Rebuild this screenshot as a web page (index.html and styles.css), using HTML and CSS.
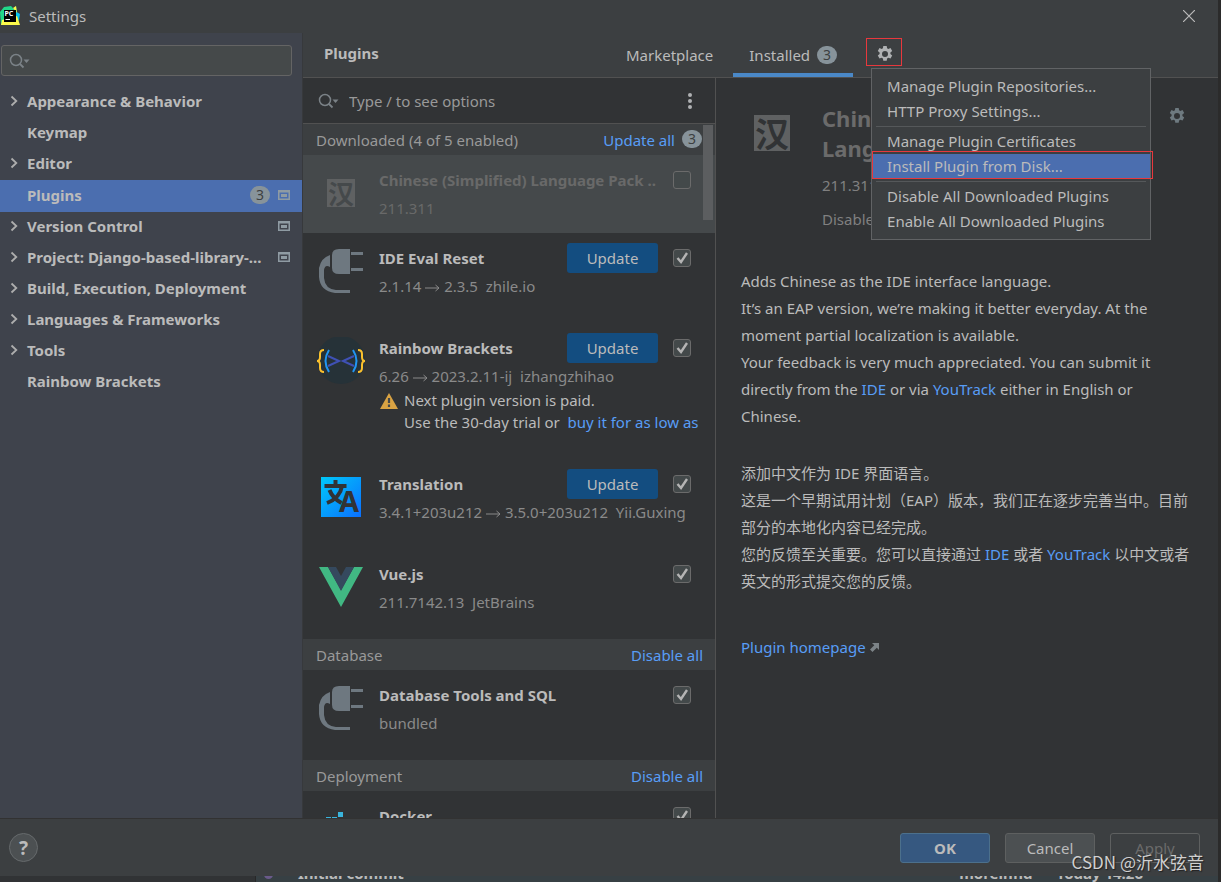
FILE: index.html
```html
<!DOCTYPE html>
<html lang="en">
<head>
<meta charset="utf-8">
<title>Settings</title>
<link rel="stylesheet" href="styles.css">
</head>
<body>
<svg class="defs" aria-hidden="true">
  <defs>
    <symbol id="search" viewBox="0 0 22 16">
      <circle cx="7" cy="7" r="5.5" fill="none" stroke="currentColor" stroke-width="1.5"/>
      <path d="M11 11l3.5 3.5" stroke="currentColor" stroke-width="1.8"/>
      <path d="M14.500 6.500h6l-3 3.500z" fill="currentColor"/>
    </symbol>
    <symbol id="chevron" viewBox="0 0 8 12">
      <path d="M1.500 1.500L6.300 6l-4.800 4.500" fill="none" stroke="currentColor" stroke-width="1.8"/>
    </symbol>
    <symbol id="project" viewBox="0 0 12 10">
      <path fill-rule="evenodd" d="M0 0h12v10H0zM1.500 2.500v6h9v-6z" fill="currentColor"/>
      <rect x="3" y="4" width="6" height="3" fill="currentColor"/>
    </symbol>
    <symbol id="gear" viewBox="0 0 16 16">
      <path fill="currentColor" fill-rule="evenodd" d="M6.300 0h3.400l.4 2.200 1.200.7 2.200-.8 1.700 3-1.800 1.500v1.500l1.800 1.400-1.700 3-2.200-.8-1.200.7-.4 2.300H6.300l-.4-2.300-1.200-.7-2.200.8-1.700-3 1.800-1.400V6.600L.8 5.100l1.700-3 2.200.8 1.200-.7zM8 5a3 3 0 1 0 0 6 3 3 0 0 0 0-6z"/>
    </symbol>
    <symbol id="plug" viewBox="0 0 48 48">
      <path d="M22 2h11v25H22q-7 0-7-6V8q0-6 7-6z" fill="currentColor"/>
      <path d="M34 5h12v3H34zM34 21h12v3H34z" fill="currentColor"/>
      <path d="M13 8v12q-5-3-6 3v8q1 11 12 12h14v3H18Q3 44 2 30v-9Q4 11 13 8z" fill="currentColor"/>
    </symbol>
  </defs>
</svg>

<header class="titlebar">
  <svg class="logo" viewBox="0 0 20 20" aria-hidden="true">
    <path d="M0 6l4-5 7-1 3 3 2-3 1 8-5 11H1z" fill="#21d789"/>
    <path d="M15 5l5 3-1 6-3 3z" fill="#07c3f2"/>
    <path d="M13 2l3-2 1 7zM2 14l15-4 3 9H1z" fill="#fcf84a"/>
    <rect x="4" y="4" width="12" height="12" fill="#000"/>
    <text x="4.500" y="10" class="logo-text">PC</text>
    <path d="M5.500 13.500h4.500" stroke="#fff"/>
  </svg>
  <h1 class="window-title">Settings</h1>
  <button class="close" aria-label="Close"><svg viewBox="0 0 12 12"><path d="M0 0l12 12M12 0L0 12" stroke="currentColor" stroke-width="1.200"/></svg></button>
</header>

<main class="main">
  <nav class="sidebar">
    <label class="side-search"><svg class="ico-search" aria-hidden="true"><use href="#search"/></svg><input type="text" aria-label="Search settings"></label>
    <ul class="tree">
      <li><a href="#"><svg class="chev"><use href="#chevron"/></svg><span>Appearance &amp; Behavior</span></a></li>
      <li><a href="#"><i class="chev"></i><span>Keymap</span></a></li>
      <li><a href="#"><svg class="chev"><use href="#chevron"/></svg><span>Editor</span></a></li>
      <li><a href="#" class="current"><i class="chev"></i><span>Plugins</span><b class="badge">3</b><svg class="proj"><use href="#project"/></svg></a></li>
      <li><a href="#"><svg class="chev"><use href="#chevron"/></svg><span>Version Control</span><svg class="proj"><use href="#project"/></svg></a></li>
      <li><a href="#"><svg class="chev"><use href="#chevron"/></svg><span>Project: Django-based-library-...</span><svg class="proj"><use href="#project"/></svg></a></li>
      <li><a href="#"><svg class="chev"><use href="#chevron"/></svg><span>Build, Execution, Deployment</span></a></li>
      <li><a href="#"><svg class="chev"><use href="#chevron"/></svg><span>Languages &amp; Frameworks</span></a></li>
      <li><a href="#"><svg class="chev"><use href="#chevron"/></svg><span>Tools</span></a></li>
      <li><a href="#"><i class="chev"></i><span>Rainbow Brackets</span></a></li>
    </ul>
  </nav>

  <section class="content">
    <div class="content-head">
      <h2 class="page-title">Plugins</h2>
      <div class="tabs">
        <button class="tab">Marketplace</button>
        <button class="tab active">Installed <b class="badge">3</b></button>
      </div>
      <div class="gear-wrap">
        <button class="gear-btn" aria-label="Plugin options"><svg><use href="#gear"/></svg></button>
        <div class="menu">
          <button>Manage Plugin Repositories...</button>
          <button>HTTP Proxy Settings...</button>
          <hr>
          <button>Manage Plugin Certificates</button>
          <button class="hot">Install Plugin from Disk...</button>
          <hr>
          <button>Disable All Downloaded Plugins</button>
          <button>Enable All Downloaded Plugins</button>
        </div>
      </div>
    </div>

    <div class="panes">
      <div class="list-pane">
        <div class="list-search">
          <svg class="ico-search" aria-hidden="true"><use href="#search"/></svg>
          <input type="text" placeholder="Type / to see options" aria-label="Search plugins">
          <button class="more" aria-label="More"><svg viewBox="0 0 4 16"><circle cx="2" cy="2" r="2"/><circle cx="2" cy="8" r="2"/><circle cx="2" cy="14" r="2"/></svg></button>
        </div>
        <div class="list">
          <div class="thumb"></div>
          <div class="group"><span>Downloaded (4 of 5 enabled)</span><a href="#">Update all</a><b class="badge">3</b></div>

          <article class="row selected">
            <div class="icon"><span class="han">汉</span></div>
            <h3>Chinese (Simplified) Language Pack ..</h3>
            <div class="controls"><input type="checkbox" aria-label="Enable Chinese Language Pack"></div>
            <p class="meta">211.311</p>
          </article>

          <article class="row">
            <svg class="icon plug"><use href="#plug"/></svg>
            <h3>IDE Eval Reset</h3>
            <div class="controls"><button class="update">Update</button><input type="checkbox" checked aria-label="Enable IDE Eval Reset"></div>
            <p class="meta">2.1.14 <svg class="arrow" viewBox="0 0 15 8"><path d="M0 4h14M10.500 1L14 4l-3.500 3"/></svg> 2.3.5&nbsp; zhile.io</p>
          </article>

          <article class="row">
            <svg class="icon" viewBox="0 0 48 48">
              <circle cx="24" cy="23" r="24" fill="#263238"/>
              <g fill="none" stroke-width="2">
                <path d="M7 13q-4 0-4 4v3q0 4-3 4 3 0 3 4v3q0 4 4 4M41 13q4 0 4 4v3q0 4 3 4-3 0-3 4v3q0 4-4 4" stroke="#fbc02d"/>
                <path d="M12 13q-7 11 0 22M36 13q7 11 0 22" stroke="#2196f3"/>
                <path d="M11 19l11 5-11 5M37 19l-11 5 11 5" stroke="#3f51b5"/>
              </g>
            </svg>
            <h3>Rainbow Brackets</h3>
            <div class="controls"><button class="update">Update</button><input type="checkbox" checked aria-label="Enable Rainbow Brackets"></div>
            <p class="meta">6.26 <svg class="arrow" viewBox="0 0 15 8"><path d="M0 4h14M10.500 1L14 4l-3.500 3"/></svg> 2023.2.11-ij&nbsp; izhangzhihao</p>
            <div class="notice">
              <svg viewBox="0 0 18 16" aria-hidden="true"><path d="M9 0l9 16H0z" fill="#d9a343"/><path d="M9 5v5M9 11.500V14" stroke="#45494a" stroke-width="2.200"/></svg>
              <p>Next plugin version is paid.<br>Use the 30-day trial or&nbsp; <a href="#">buy it for as low as</a></p>
            </div>
          </article>

          <article class="row">
            <svg class="icon" viewBox="0 0 48 48">
              <defs><linearGradient id="tg" x1="0" y1="0" x2="1" y2="1"><stop offset="0" stop-color="#00c8f8"/><stop offset="1" stop-color="#0b70ff"/></linearGradient></defs>
              <rect x="4" y="4" width="40" height="40" fill="url(#tg)"/>
              <g fill="none" stroke="#313335" stroke-width="4">
                <path d="M7.500 13h22M18.500 7v6M10 30q13-5 15-17M12.500 17q3 8 12 13"/>
              </g>
              <text x="22" y="39" class="tr-a">A</text>
            </svg>
            <h3>Translation</h3>
            <div class="controls"><button class="update">Update</button><input type="checkbox" checked aria-label="Enable Translation"></div>
            <p class="meta">3.4.1+203u212 <svg class="arrow" viewBox="0 0 15 8"><path d="M0 4h14M10.500 1L14 4l-3.500 3"/></svg> 3.5.0+203u212&nbsp; Yii.Guxing</p>
          </article>

          <article class="row">
            <svg class="icon" viewBox="0 0 48 48"><path d="M2 4h9l13 23L37 4h9L24 44z" fill="#41b883"/><path d="M11 4h8l5 9 5-9h8L24 28z" fill="#35495e"/></svg>
            <h3>Vue.js</h3>
            <div class="controls"><input type="checkbox" checked aria-label="Enable Vue.js"></div>
            <p class="meta">211.7142.13&nbsp; JetBrains</p>
          </article>

          <div class="group"><span>Database</span><a href="#">Disable all</a></div>
          <article class="row">
            <svg class="icon plug"><use href="#plug"/></svg>
            <h3>Database Tools and SQL</h3>
            <div class="controls"><input type="checkbox" checked aria-label="Enable Database Tools and SQL"></div>
            <p class="meta">bundled</p>
          </article>

          <div class="group"><span>Deployment</span><a href="#">Disable all</a></div>
          <article class="row">
            <svg class="icon" viewBox="0 0 48 48"><path d="M21 7h5v5h-5zM9 12h5v5H9zM15 12h5v5h-5zM21 13h5v5h-5zM4 21h34q3-3 6-1-2 4-6 4-4 13-18 13Q5 37 4 21z" fill="#3ab4dc"/></svg>
            <h3>Docker</h3>
            <div class="controls"><input type="checkbox" checked aria-label="Enable Docker"></div>
          </article>
        </div>
      </div>

      <article class="detail">
        <header class="detail-head">
          <span class="han big">汉</span>
          <div class="detail-info">
            <h2>Chinese (Simplified)<br>Language Pack</h2>
            <p>211.311</p>
            <p>Disabled</p>
          </div>
          <button class="detail-gear" aria-label="Plugin settings"><svg><use href="#gear"/></svg></button>
        </header>
        <div class="description">
          <p>Adds Chinese as the IDE interface language.<br>It’s an EAP version, we’re making it better everyday. At the<br>moment partial localization is available.<br>Your feedback is very much appreciated. You can submit it<br>directly from the <a href="#">IDE</a> or via <a href="#">YouTrack</a> either in English or<br>Chinese.</p>
          <p lang="zh-CN">添加中文作为 IDE 界面语言。<br>这是一个早期试用计划（EAP）版本，我们正在逐步完善当中。目前<br>部分的本地化内容已经完成。<br>您的反馈至关重要。您可以直接通过 <a href="#">IDE</a> 或者 <a href="#">YouTrack</a> 以中文或者<br>英文的形式提交您的反馈。</p>
          <a class="home" href="#">Plugin homepage <svg viewBox="0 0 9 9"><path d="M2 0h7v7L6.800 4.800 2.500 9 0 6.500l4.300-4.200z" fill="#7c8387"/></svg></a>
        </div>
      </article>
    </div>
  </section>
</main>

<footer class="footer">
  <button class="help" aria-label="Help">?</button>
  <div class="actions">
    <button class="btn primary">OK</button>
    <button class="btn">Cancel</button>
    <button class="btn off" disabled>Apply</button>
  </div>
  <span class="watermark">CSDN @沂水弦音</span>
</footer>
<div class="behind"><div class="behind-left"></div><div class="commit"><i class="dot"></i><span>Initial commit</span><span class="author">moreinfid</span><span>Today 14:26</span></div></div>
</body>
</html>
```
FILE: styles.css
```css
* { box-sizing: border-box; }
body {
  margin: 0;
  height: 100vh;
  display: flex;
  flex-direction: column;
  overflow: hidden;
  border-right: 3px solid #2b2b2b;
  background: #3c3f41;
  color: #bbbbbb;
  font: 15px/22px "Noto Sans", "Noto Sans CJK SC", sans-serif;
}
h1, h2, h3, p, ul { margin: 0; padding: 0; }
ul { list-style: none; }
a { color: #589df6; text-decoration: none; }
button, input { font: inherit; color: inherit; margin: 0; padding: 0; border: 0; background: none; }
input[type="text"] { outline: 0; flex: 1; min-width: 0; }
svg { display: block; flex: none; }
.defs { position: absolute; width: 0; height: 0; }

.titlebar { flex: none; display: flex; align-items: center; height: 33px; padding: 0 23px 2px 0; }
.logo { width: 20px; height: 20px; }
.logo-text { font: bold 7px "Noto Sans", sans-serif; fill: #fff; }
.window-title { flex: 1; margin-left: 9px; font-size: 15px; font-weight: 400; }
.close svg { width: 12px; height: 12px; }

.main { flex: 1; min-height: 0; display: flex; border-bottom: 1px solid #323232; }
.sidebar { flex: none; width: 303px; padding-top: 12px; background: #3f434c; border-right: 1px solid #37393c; }
.side-search {
  display: flex; align-items: center; gap: 4px;
  height: 31px; margin: 0 10px 11px 1px; padding-left: 7px;
  border: 1px solid #646464; border-radius: 3px; background: #45494a;
}
.ico-search { width: 22px; height: 16px; color: #7b8287; }
.tree a {
  display: flex; align-items: center; height: 31px;
  padding: 0 12px 3px 10px; color: #bbbbbb; font-weight: 700;
}
.tree span { flex: 1; white-space: nowrap; }
.tree .current { height: 32px; background: #4b6eaf; }
.chev { width: 8px; height: 12px; margin-right: 9px; color: #adadad; }
.proj { width: 12px; height: 10px; color: #8f9ba3; }
.badge {
  flex: none; width: 20px; height: 18px; border-radius: 9px;
  background: #87939a; color: #3c3f41;
  font-size: 14px; font-weight: 400; line-height: 18px; text-align: center;
}
.tree .badge { margin-right: 8px; }

.content { flex: 1; min-width: 0; display: flex; flex-direction: column; }
.content-head { display: flex; height: 45px; padding-left: 21px; border-bottom: 1px solid #515151; }
.page-title { width: 286px; font-size: 15px; font-weight: 700; line-height: 40px; }
.tabs { display: flex; gap: 4px; }
.tab { display: flex; align-items: center; gap: 7px; padding: 4px 16px 0; border-bottom: 4px solid transparent; }
.tab.active { border-color: #4a88c7; }
.gear-wrap { position: relative; margin-left: 13px; }
.gear-btn { display: grid; place-items: center; width: 36px; height: 28px; margin-top: 5px; padding: 3px 0 0 2px; border: 1px solid #e8383d; color: #afb1b3; }
.gear-btn svg, .detail-gear svg { width: 16px; height: 16px; }
.menu {
  position: absolute; z-index: 5; left: 5px; top: 35px; width: 280px; padding: 5px 0;
  border: 1px solid #616365; background: #3c3f41;
}
.menu button { display: block; width: 100%; height: 25px; padding-left: 15px; text-align: left; line-height: 25px; white-space: nowrap; }
.menu hr { height: 1px; margin: 2px 4px; border: 0; background: #55585a; }
.menu .hot { position: relative; background: #4b6eaf; }
.menu .hot::after { content: ""; position: absolute; inset: -3px -3px 0 0; border: 1px solid #e8383d; }

.panes { flex: 1; min-height: 0; display: flex; background: #313335; }
.list-pane { flex: none; width: 413px; display: flex; flex-direction: column; border-right: 1px solid #515151; }
.list-search { flex: none; display: flex; align-items: center; gap: 9px; height: 46px; padding: 0 23px 0 15px; border-bottom: 1px solid #515151; }
.list-search input::placeholder { color: #999999; opacity: 1; }
.more svg { width: 4px; height: 16px; fill: #afb1b3; }
.list { position: relative; flex: 1; min-height: 0; overflow: hidden; }
.thumb { position: absolute; z-index: 2; top: 1px; right: 2px; width: 10px; height: 95px; background: #5c5e60; }
.group { display: flex; align-items: center; height: 31px; padding: 0 12px 0 13px; background: #3c3f41; color: #999999; }
.group span { flex: 1; }
.group .badge { margin: 0 1px 2px 7px; }
.row {
  display: grid; grid-template-columns: 48px 1fr auto; grid-template-rows: 30px 26px; column-gap: 14px;
  padding: 10px 12px 24px 14px;
}
.row h3 { font-size: 15px; font-weight: 700; line-height: 30px; white-space: nowrap; }
.icon { grid-row: 1 / 3; width: 48px; height: 48px; margin-top: 4px; }
.plug { color: #6e7880; }
.controls { display: flex; align-items: center; gap: 15px; margin-right: 12px; }
.meta { grid-column: 2 / 4; line-height: 26px; color: #8a8a8a; white-space: nowrap; }
.arrow { display: inline-block; width: 15px; height: 8px; fill: none; stroke: currentColor; }
.update { width: 91px; height: 30px; border-radius: 3px; background: #134d80; color: #bbbbbb; }
input[type="checkbox"] {
  appearance: none; width: 18px; height: 18px;
  border: 1px solid #6b6b6b; border-radius: 3px; background: #43494a;
}
input[type="checkbox"]:checked {
  background: #43494a url("data:image/svg+xml,%3Csvg xmlns='http://www.w3.org/2000/svg' viewBox='0 0 16 16'%3E%3Cpath d='M3.500 8l3.500 4 6-9' fill='none' stroke='%23b4b4b4' stroke-width='2.400'/%3E%3C/svg%3E") center / 16px 16px;
}
.selected { padding-bottom: 12px; background: #45494b; }
.selected h3, .selected .meta { color: #696969; }
.selected .icon { display: grid; place-items: center; }
.han {
  display: grid; place-items: center; width: 28px; height: 28px; background: #5f6162; color: #45494b;
  font: 700 26px/28px "Noto Sans CJK SC", sans-serif;
}
.notice { grid-column: 2 / 4; display: flex; gap: 6px; padding: 0 0 2px 1px; overflow: hidden; white-space: nowrap; }
.notice svg { width: 18px; height: 16px; margin-top: 4px; }
.tr-a { font: bold 29px "Noto Sans", sans-serif; fill: #313335; }

.detail { flex: 1; min-width: 0; padding: 25px 33px 0 25px; }
.detail-head { display: flex; }
.han.big { width: 36px; height: 36px; margin: 12px 32px 0 13px; color: #313335; font-size: 34px; line-height: 36px; }
.detail-info { flex: 1; color: #808080; }
.detail-info h2 { margin-bottom: 5px; color: #6b6b6b; font-size: 22px; font-weight: 700; line-height: 30px; }
.detail-info p { line-height: 34px; }
.detail-gear { align-self: flex-start; margin-top: 5px; color: #6e7a80; }
.description { margin-top: 32px; line-height: 27px; white-space: nowrap; }
.description p { margin-bottom: 30px; }
.home { display: flex; align-items: center; gap: 4px; margin-top: 39px; }
.home svg { width: 9px; height: 9px; }

.footer { position: relative; flex: none; display: flex; align-items: center; justify-content: space-between; height: 57px; padding: 0 18px 0 9px; }
.help { width: 29px; height: 29px; border: 1px solid #666a6c; border-radius: 50%; background: #4c5052; font-size: 19px; font-weight: 700; line-height: 22px; }
.actions { display: flex; gap: 15px; }
.btn { width: 90px; height: 30px; border: 1px solid #5e6060; border-radius: 3px; background: #4c5052; }
.primary { border-color: #4c708c; background: #365880; font-weight: 700; }
.off { background: none; color: #6b6b6b; }
.watermark {
  position: absolute; right: 14px; bottom: 2px; color: #d0d0d0;
  font: 17px/24px "Noto Sans CJK SC", sans-serif; text-shadow: 1px 1px 1px #222;
}
.behind { flex: none; display: flex; height: 6px; overflow: hidden; background: #313335; }
.behind-left { width: 256px; border-right: 1px solid #282828; }
.commit { flex: 1; display: flex; align-items: flex-end; margin-bottom: -2px; padding: 0 75px 0 8px; background: #374044; font-weight: 700; }
.dot { width: 9px; height: 9px; margin: 0 25px 5px 0; border-radius: 50%; background: #6a5a8a; }
.author { margin: 0 24px 0 auto; }
```
